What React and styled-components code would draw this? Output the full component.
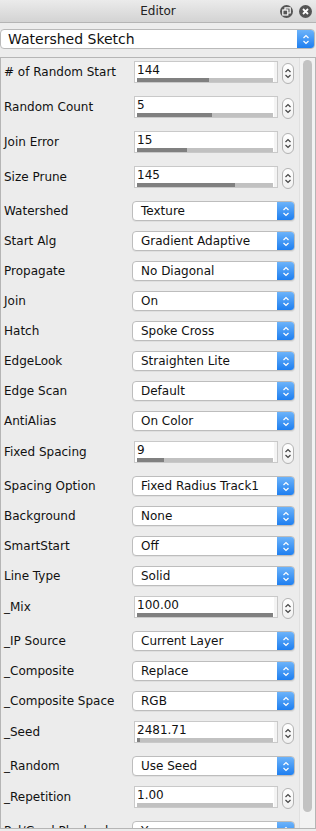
import React from 'react';
import styled, { createGlobalStyle } from 'styled-components';

const GlobalStyle = createGlobalStyle`
  html, body {
    margin: 0;
    padding: 0;
    background: #ececec;
  }
  body {
    font-family: "Lucida Grande", "DejaVu Sans", "Noto Sans", sans-serif;
    color: #111;
  }
`;

// Window chrome
const Window = styled.div`
  width: 316px;
  height: 831px;
  overflow: hidden;
  background: #ececec;
  display: flex;
  flex-direction: column;
`;

const TitleBar = styled.div`
  height: 22px;
  flex: none;
  display: flex;
  align-items: center;
  justify-content: center;
  position: relative;
  background: linear-gradient(#ebebeb, #d3d3d3);
  border-bottom: 1px solid #b4b4b4;
  font-size: 12px;
  color: #222;
`;

const TitleButtons = styled.div`
  position: absolute;
  right: 4px;
  top: 5px;
  display: flex;
  gap: 6px;
`;

const RoundButton = styled.div`
  width: 13px;
  height: 13px;
  border-radius: 50%;
  background: #555;
  display: flex;
  align-items: center;
  justify-content: center;
`;

const PresetSelect = styled.div`
  margin: 6px 1px 0 0;
  height: 20px;
  flex: none;
  display: flex;
  background: #fff;
  border: 1px solid #b9b9b9;
  border-radius: 4px;
  box-sizing: border-box;
  overflow: hidden;
`;

const Panel = styled.div`
  margin: 8px 0 2px;
  flex: 1;
  min-height: 0;
  display: flex;
  border: 1px solid #b5b5b5;
  overflow: hidden;
`;

const Rows = styled.div`
  flex: 1;
  padding: 3px 0 0 3px;
  display: flex;
  flex-direction: column;
  gap: 10px;
  overflow: hidden;
`;

const Row = styled.div`
  display: flex;
  align-items: flex-start;
  height: ${(p) => (p.$numeric ? 25 : 20)}px;
  flex: none;
`;

const Label = styled.div`
  width: 128px;
  flex: none;
  font-size: 12px;
  line-height: ${(p) => (p.$numeric ? 22 : 20)}px;
  white-space: nowrap;
`;

// Numeric field with progress strip
const NumField = styled.div`
  width: 144px;
  height: 22px;
  margin-left: 2px;
  box-sizing: border-box;
  background: #fff;
  border: 1px solid #c9c9c9;
  padding: 1px 4px 0 2px;
  display: flex;
  flex-direction: column;
  box-shadow: inset -3px 0 0 #f4f4f4;
`;

const NumText = styled.div`
  font-size: 12px;
  line-height: 14px;
  height: 14px;
`;

const Track = styled.div`
  height: 4px;
  margin-top: 1px;
  background: #c1c1c1;
  display: flex;
`;

const Fill = styled.div`
  height: 100%;
  background: #808080;
`;

const Stepper = styled.div`
  width: 12px;
  height: 21px;
  margin: 2px 0 0 4px;
  box-sizing: border-box;
  border: 1px solid #b3b3b3;
  border-radius: 6px;
  background: linear-gradient(#ffffff, #f1f1f1);
  display: flex;
  align-items: center;
  justify-content: center;
`;

// Popup select
const Select = styled.div`
  width: 163px;
  height: 20px;
  box-sizing: border-box;
  display: flex;
  background: #fff;
  border: 1px solid #bdbdbd;
  border-radius: 4px;
  overflow: hidden;
  box-shadow: 0 1px 0 rgba(0, 0, 0, 0.05);
`;

const SelectText = styled.div`
  flex: 1;
  font-size: ${(p) => (p.$large ? 14 : 12)}px;
  line-height: 18px;
  padding-left: ${(p) => (p.$large ? 7 : 8)}px;
  white-space: nowrap;
  overflow: hidden;
`;

const Arrows = styled.div`
  width: 17px;
  flex: none;
  background: linear-gradient(#6cb3fa, #1f7ff0);
  display: flex;
  align-items: center;
  justify-content: center;
`;

// Scrollbar
const ScrollTrack = styled.div`
  width: 15px;
  flex: none;
  background: #f2f2f2;
  border-left: 1px solid #e0e0e0;
  display: flex;
  justify-content: center;
  padding-top: 2px;
`;

const Thumb = styled.div`
  width: 9px;
  height: 752px;
  border-radius: 5px;
  background: #c2c2c2;
`;

const Chevrons = ({ color }) => (
  <svg width="8" height="13" viewBox="0 0 8 13">
    <path d="M1.5 5 L4 2.5 L6.5 5" fill="none" stroke={color} strokeWidth="1.2" />
    <path d="M1.5 8 L4 10.5 L6.5 8" fill="none" stroke={color} strokeWidth="1.2" />
  </svg>
);

const rows = [
  { label: '# of Random Start', num: '144', fill: 0.53 },
  { label: 'Random Count', num: '5', fill: 0.555 },
  { label: 'Join Error', num: '15', fill: 0.37 },
  { label: 'Size Prune', num: '145', fill: 0.72 },
  { label: 'Watershed', value: 'Texture' },
  { label: 'Start Alg', value: 'Gradient Adaptive' },
  { label: 'Propagate', value: 'No Diagonal' },
  { label: 'Join', value: 'On' },
  { label: 'Hatch', value: 'Spoke Cross' },
  { label: 'EdgeLook', value: 'Straighten Lite' },
  { label: 'Edge Scan', value: 'Default' },
  { label: 'AntiAlias', value: 'On Color' },
  { label: 'Fixed Spacing', num: '9', fill: 0.2 },
  { label: 'Spacing Option', value: 'Fixed Radius Track1' },
  { label: 'Background', value: 'None' },
  { label: 'SmartStart', value: 'Off' },
  { label: 'Line Type', value: 'Solid' },
  { label: '_Mix', num: '100.00', fill: 1 },
  { label: '_IP Source', value: 'Current Layer' },
  { label: '_Composite', value: 'Replace' },
  { label: '_Composite Space', value: 'RGB' },
  { label: '_Seed', num: '2481.71', fill: 0.02 },
  { label: '_Random', value: 'Use Seed' },
  { label: '_Repetition', num: '1.00', fill: 0 },
  { label: 'Pal/Grad Playback', value: 'Yes' },
];

const App = () => (
  <Window>
    <GlobalStyle />
    <TitleBar>
      Editor
      <TitleButtons>
        <RoundButton>
          <svg width="9" height="9" viewBox="0 0 9 9">
            <rect x="0.8" y="3" width="5" height="5" fill="none" stroke="#fff" strokeWidth="1.2" />
            <path d="M3 3 V0.8 H8.2 V6 H6" fill="none" stroke="#fff" strokeWidth="1.2" />
          </svg>
        </RoundButton>
        <RoundButton>
          <svg width="7" height="7" viewBox="0 0 7 7">
            <path d="M1 1 L6 6 M6 1 L1 6" stroke="#fff" strokeWidth="1.8" />
          </svg>
        </RoundButton>
      </TitleButtons>
    </TitleBar>

    <PresetSelect>
      <SelectText $large>Watershed Sketch</SelectText>
      <Arrows>
        <Chevrons color="#fff" />
      </Arrows>
    </PresetSelect>

    <Panel>
      <Rows>
        {rows.map((r) =>
          r.num !== undefined ? (
            <Row key={r.label} $numeric>
              <Label $numeric>{r.label}</Label>
              <NumField>
                <NumText>{r.num}</NumText>
                <Track>
                  <Fill style={{ width: `${r.fill * 100}%` }} />
                </Track>
              </NumField>
              <Stepper>
                <Chevrons color="#444" />
              </Stepper>
            </Row>
          ) : (
            <Row key={r.label}>
              <Label>{r.label}</Label>
              <Select>
                <SelectText>{r.value}</SelectText>
                <Arrows>
                  <Chevrons color="#fff" />
                </Arrows>
              </Select>
            </Row>
          )
        )}
      </Rows>
      <ScrollTrack>
        <Thumb />
      </ScrollTrack>
    </Panel>
  </Window>
);

export default App;
